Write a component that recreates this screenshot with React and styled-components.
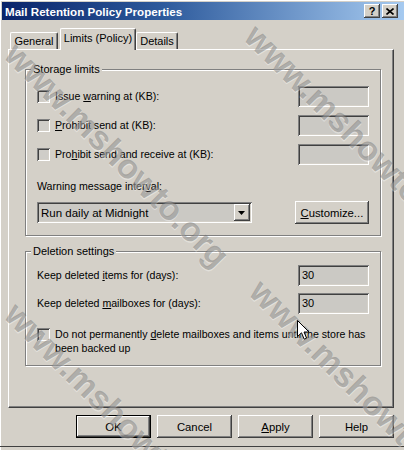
import React from 'react'
import styled, { createGlobalStyle } from 'styled-components'

const Global = createGlobalStyle`
  html, body { margin: 0; padding: 0; background: #d4d0c8; }
  * { box-sizing: border-box; }
`

const raised = `
  box-shadow: inset -1px -1px #404040, inset 1px 1px #fff, inset -2px -2px #808080, inset 2px 2px #d4d0c8;
`
const sunken = `
  box-shadow: inset 1px 1px #808080, inset -1px -1px #fff, inset 2px 2px #404040, inset -2px -2px #d4d0c8;
`

const Window = styled.div`
  position: relative;
  width: 404px;
  height: 450px;
  overflow: hidden;
  background: #d4d0c8;
  box-shadow: inset 1px 1px #fff;
  padding-top: 2px;
  display: flex;
  flex-direction: column;
  font-family: "Liberation Sans", Arial, sans-serif;
  font-size: 10.6px;
  color: #000;
`

const TitleBar = styled.div`
  height: 18px;
  margin-left: 2px;
  padding: 0 6px 0 3px;
  display: flex;
  align-items: center;
  background: linear-gradient(90deg, #0a246a 0%, #2d5a9c 40%, #a6caf0 100%);
`

const Title = styled.div`
  flex: 1;
  color: #fff;
  font-weight: bold;
  font-size: 11.6px;
`

const TitleButton = styled.div`
  width: 16px;
  height: 14px;
  margin-left: 2px;
  background: #d4d0c8;
  ${raised}
  display: flex;
  align-items: center;
  justify-content: center;
  font-weight: bold;
  font-size: 11px;
  line-height: 1;
`

const TabStrip = styled.div`
  margin-top: 8px;
  height: 21px;
  display: flex;
  align-items: flex-end;
  padding-left: 8px;
`

const Tab = styled.div`
  position: relative;
  z-index: ${p => (p.$active ? 1 : 0)};
  width: ${p => p.$w}px;
  height: ${p => (p.$active ? 22 : 17)}px;
  margin-left: ${p => p.$ml}px;
  margin-bottom: ${p => (p.$active ? -1 : 0)}px;
  background: #d4d0c8;
  border-top: 1px solid #fff;
  border-left: 1px solid #fff;
  border-right: 1px solid #404040;
  border-radius: 2px 2px 0 0;
  box-shadow: inset -1px 0 #808080;
  display: flex;
  justify-content: center;
  padding-top: ${p => (p.$active ? 3 : 2)}px;
  font-size: 11px;
`

const Panel = styled.div`
  margin-left: 8px;
  width: 386px;
  height: 359px;
  border-top: 1px solid #fff;
  border-left: 1px solid #fff;
  border-right: 1px solid #404040;
  border-bottom: 1px solid #404040;
  box-shadow: inset -1px -1px #808080;
  padding: 13px 0 0 16px;
`

const Group = styled.fieldset`
  margin: ${p => p.$mt || 0}px 0 0 0;
  padding: 0;
  min-width: 0;
  width: 356px;
  border: 1px solid #808080;
  box-shadow: inset 1px 1px #fff, 1px 1px #fff;
`

const Legend = styled.legend`
  margin-left: 5px;
  padding: 0 2px;
  background: #d4d0c8;
  line-height: 13px;
  font-size: 11px;
`

const GroupBody = styled.div`
  padding: ${p => p.$pt}px 11px ${p => p.$pb}px 11px;
  display: flex;
  flex-direction: column;
`

const Row = styled.div`
  display: flex;
  align-items: center;
  height: 21px;
  margin-top: ${p => p.$mt || 0}px;
`

const CheckRow = styled.div`
  display: flex;
  align-items: flex-start;
  margin-top: ${p => p.$mt || 0}px;
`

const CheckBox = styled.span`
  flex: none;
  width: 13px;
  height: 13px;
  margin-right: 5px;
  background: #cfcdc8;
  ${sunken}
`

const Label = styled.span`
  line-height: 13.5px;
  white-space: nowrap;
`

const Field = styled.div`
  margin-left: auto;
  width: 71px;
  height: 21px;
  background: #cbc9c4;
  ${sunken}
  padding: 4px 0 0 4px;
  line-height: 13px;
  font-size: 11px;
`

const Caption = styled.div`
  margin-top: 15px;
  line-height: 13px;
`

const ComboRow = styled.div`
  margin-top: 8px;
  display: flex;
  align-items: center;
`

const Combo = styled.div`
  width: 217px;
  height: 21px;
  background: #cbc9c4;
  ${sunken}
  display: flex;
  align-items: center;
  padding: 0 2px 0 4px;
`

const ComboText = styled.span`
  flex: 1;
  font-size: 11.5px;
`

const ComboArrow = styled.div`
  width: 16px;
  height: 17px;
  background: #d4d0c8;
  ${raised}
  display: flex;
  align-items: center;
  justify-content: center;
`

const PushButton = styled.div`
  width: 75px;
  height: 23px;
  margin-left: ${p => p.$ml ?? 0}px;
  background: #d4d0c8;
  ${raised}
  border: ${p => (p.$default ? '1px solid #000' : 'none')};
  display: flex;
  align-items: center;
  justify-content: center;
  font-size: 11.3px;
`

const ButtonBar = styled.div`
  margin-top: 7px;
  width: 394px;
  display: flex;
  justify-content: flex-end;
  gap: 6px;
`

const BottomEdge = styled.div`
  margin-top: auto;
  height: 4px;
  border-top: 1px solid #404040;
`

const Watermarks = styled.div`
  position: absolute;
  inset: 0;
  pointer-events: none;
`

const Mark = styled.div`
  position: absolute;
  transform: translate(-50%, -50%) rotate(45deg);
  white-space: nowrap;
  font-family: "Liberation Sans", Arial, sans-serif;
  font-weight: bold;
  font-size: 34px;
  color: rgba(110, 110, 110, 0.45);
  text-shadow: 1px 1px 0 rgba(255, 255, 255, 0.35);
`

const Cursor = styled.svg`
  position: absolute;
  left: 297px;
  top: 320px;
`

const marks = [
  { x: 117, y: 155 },
  { x: 357, y: 137 },
  { x: 117, y: 415 },
  { x: 362, y: 392 },
]

export default function App() {
  return (
    <>
      <Global />
      <Window>
        <TitleBar>
          <Title>Mail Retention Policy Properties</Title>
          <TitleButton>?</TitleButton>
          <TitleButton>
            <svg width="8" height="7" viewBox="0 0 8 7">
              <path d="M0.5 0.5 L7.5 6.5 M7.5 0.5 L0.5 6.5" stroke="#000" strokeWidth="1.6" />
            </svg>
          </TitleButton>
        </TitleBar>

        <TabStrip>
          <Tab $w={48} $ml={2}>General</Tab>
          <Tab $w={76} $ml={2} $active>Limits (Policy)</Tab>
          <Tab $w={42} $ml={0}>Details</Tab>
        </TabStrip>

        <Panel>
          <Group>
            <Legend>Storage limits</Legend>
            <GroupBody $pt={10} $pb={11}>
              <Row>
                <CheckBox />
                <Label>Issue <u>w</u>arning at (KB):</Label>
                <Field />
              </Row>
              <Row $mt={8}>
                <CheckBox />
                <Label><u>P</u>rohibit send at (KB):</Label>
                <Field />
              </Row>
              <Row $mt={8}>
                <CheckBox />
                <Label>Pro<u>h</u>ibit send and receive at (KB):</Label>
                <Field />
              </Row>
              <Caption>Warning message inter<u>v</u>al:</Caption>
              <ComboRow>
                <Combo>
                  <ComboText>Run daily at Midnight</ComboText>
                  <ComboArrow>
                    <svg width="7" height="4" viewBox="0 0 7 4">
                      <path d="M0 0 H7 L3.5 4 Z" fill="#000" />
                    </svg>
                  </ComboArrow>
                </Combo>
                <PushButton $ml={43}><u>C</u>ustomize...</PushButton>
              </ComboRow>
            </GroupBody>
          </Group>

          <Group $mt={9}>
            <Legend>Deletion settings</Legend>
            <GroupBody $pt={7} $pb={10}>
              <Row>
                <Label>Keep deleted <u>i</u>tems for (days):</Label>
                <Field>30</Field>
              </Row>
              <Row $mt={7}>
                <Label>Keep deleted <u>m</u>ailboxes for (days):</Label>
                <Field>30</Field>
              </Row>
              <CheckRow $mt={14}>
                <CheckBox />
                <Label>
                  Do not permanently <u>d</u>elete mailboxes and items until the store has
                  <br />
                  been backed up
                </Label>
              </CheckRow>
            </GroupBody>
          </Group>
        </Panel>

        <ButtonBar>
          <PushButton $default>OK</PushButton>
          <PushButton>Cancel</PushButton>
          <PushButton><u>A</u>pply</PushButton>
          <PushButton>Help</PushButton>
        </ButtonBar>

        <BottomEdge />

        <Watermarks>
          {marks.map((m, i) => (
            <Mark key={i} style={{ left: m.x, top: m.y }}>www.mshowto.org</Mark>
          ))}
        </Watermarks>

        <Cursor width="13" height="21" viewBox="0 0 13 21">
          <path d="M0.5 0.5 L0.5 16.5 L4.5 12.8 L7.2 19.2 L9.6 18.2 L7 12 L12 12 Z" fill="#fff" stroke="#000" strokeWidth="1" />
        </Cursor>
      </Window>
    </>
  )
}
